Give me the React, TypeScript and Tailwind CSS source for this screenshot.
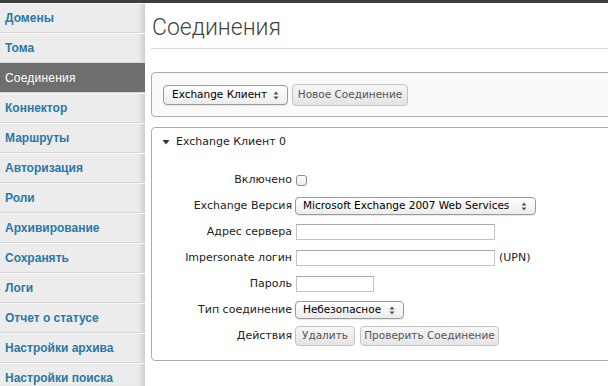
import React from 'react';

const navItems = [
  'Домены',
  'Тома',
  'Соединения',
  'Коннектор',
  'Маршруты',
  'Авторизация',
  'Роли',
  'Архивирование',
  'Сохранять',
  'Логи',
  'Отчет о статусе',
  'Настройки архива',
  'Настройки поиска',
];

const Arrows = () => (
  <svg width="6" height="9" viewBox="0 0 6 9" className="shrink-0">
    <path d="M3 0.5 L5.5 3.5 H0.5 Z" fill="#555" />
    <path d="M3 8.5 L5.5 5.5 H0.5 Z" fill="#555" />
  </svg>
);

const Select = ({ label, className }: { label: string; className: string }) => (
  <div
    className={`flex items-center justify-between border border-[#9a9a9a] rounded-[4px] bg-gradient-to-b from-white to-[#ececec] shadow-[0_1px_1px_rgba(0,0,0,0.1)] text-[10.5px] text-black ${className}`}
  >
    <span className="whitespace-nowrap">{label}</span>
    <Arrows />
  </div>
);

const Button = ({ label, className }: { label: string; className: string }) => (
  <div
    className={`flex items-center justify-center border border-[#c4c4c4] rounded-[4px] bg-gradient-to-b from-[#f7f7f7] to-[#e4e4e4] text-[10.5px] text-[#555] whitespace-nowrap ${className}`}
  >
    {label}
  </div>
);

const Input = ({ className }: { className: string }) => (
  <div className={`h-[16px] border border-[#c2c2c2] border-t-[#a8a8a8] bg-white ${className}`} />
);

const Row = ({ label, children }: { label: string; children: React.ReactNode }) => (
  <div className="flex items-center h-[26px]">
    <div className="w-[143px] pr-[3px] text-right text-[11px] text-[#222] whitespace-nowrap">{label}</div>
    {children}
  </div>
);

export default function App() {
  return (
    <div className="w-[608px] h-[386px] overflow-hidden flex flex-col bg-white font-['DejaVu_Sans',sans-serif]">
      <div className="h-[3px] bg-[#3e3e3e] shrink-0" />
      <div className="flex flex-1 min-h-0">
        <aside className="w-[145px] shrink-0 bg-[#ececec] shadow-[inset_-7px_0_6px_-5px_rgba(0,0,0,0.18)] font-['Liberation_Sans',sans-serif]">
          {navItems.map((item) => {
            const active = item === 'Соединения';
            return (
              <div
                key={item}
                className={`h-[30px] flex items-center pl-[5px] text-[12px] border-b border-[#d6d6d6] ${
                  active
                    ? 'bg-[#6e6e6e] text-white font-normal tracking-[0.2px]'
                    : 'text-[#2a78a8] font-bold shadow-[inset_0_1px_0_#f8f8f8]'
                }`}
              >
                {item}
              </div>
            );
          })}
        </aside>

        <main className="flex-1 pl-[6px]">
          <div className="border-b border-[#dcdcdc] pt-[10px] pb-[5px]">
            <h1 className="h-[30px] flex items-center pl-[1px] text-[23px] font-light text-[#444] font-['Roboto',sans-serif]">
              Соединения
            </h1>
          </div>

          <div className="mt-[23px] w-[480px] h-[45px] border border-[#ababab] rounded-l-[4px] bg-[#fafafa] flex items-center gap-[4px] pl-[11px] pt-[1px]">
            <Select label="Exchange Клиент" className="w-[125px] h-[20px] pl-[8px] pr-[8px]" />
            <Button label="Новое Соединение" className="w-[116px] h-[22px]" />
          </div>

          <div className="mt-[10px] w-[480px] h-[234px] border border-[#ababab] rounded-l-[4px] bg-white">
            <div className="h-[28px] flex items-center pl-[10px] text-[11px] text-[#222]">
              <svg width="8" height="6" viewBox="0 0 8 6" className="mr-[6px]">
                <path d="M0.5 1 H7.5 L4 5.5 Z" fill="#333" />
              </svg>
              Exchange Клиент 0
            </div>
            <div className="mt-[11px]">
              <Row label="Включено">
                <div className="w-[11px] h-[11px] ml-[1px] border border-[#8f8f8f] rounded-[3px] bg-gradient-to-b from-white to-[#eaeaea]" />
              </Row>
              <Row label="Exchange Версия">
                <Select label="Microsoft Exchange 2007 Web Services" className="w-[241px] h-[18px] pl-[7px] pr-[8px]" />
              </Row>
              <Row label="Адрес сервера">
                <Input className="w-[199px] ml-[1px]" />
              </Row>
              <Row label="Impersonate логин">
                <Input className="w-[199px] ml-[1px]" />
                <span className="ml-[4px] text-[11px] text-[#222]">(UPN)</span>
              </Row>
              <Row label="Пароль">
                <Input className="w-[78px] ml-[1px]" />
              </Row>
              <Row label="Тип соединение">
                <Select label="Небезопасное" className="w-[109px] h-[18px] pl-[7px] pr-[8px]" />
              </Row>
              <Row label="Действия">
                <div className="flex gap-[5px]">
                  <Button label="Удалить" className="w-[60px] h-[20px]" />
                  <Button label="Проверить Соединение" className="w-[139px] h-[20px]" />
                </div>
              </Row>
            </div>
          </div>
        </main>
      </div>
    </div>
  );
}
